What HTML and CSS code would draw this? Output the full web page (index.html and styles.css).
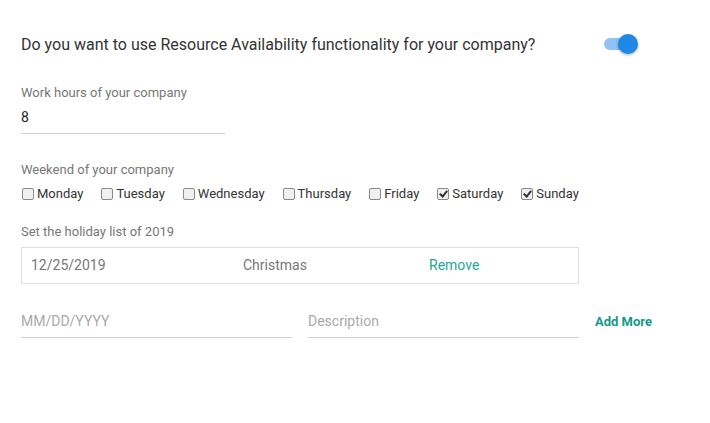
FILE: index.html
```html
<!DOCTYPE html>
<html lang="en">
<head>
    <meta charset="UTF-8">
    <meta name="viewport" content="width=device-width, initial-scale=1.0">
    <title>Resource Availability</title>
    <link rel="stylesheet" href="styles.css">
</head>
<body>
    <div class="settings">
        <!-- Main toggle -->
        <div class="question-row">
            <span class="question">Do you want to use Resource Availability functionality for your company?</span>
            <span class="toggle"><span class="toggle-track"></span><span class="toggle-thumb"></span></span>
        </div>

        <!-- Work hours -->
        <div class="field hours-field">
            <label class="field-label">Work hours of your company</label>
            <div class="text-input hours">8</div>
        </div>

        <!-- Weekend days -->
        <div class="field weekend-field">
            <label class="field-label">Weekend of your company</label>
            <div class="days">
                <label class="day"><span class="box"></span>Monday</label>
                <label class="day"><span class="box"></span>Tuesday</label>
                <label class="day"><span class="box"></span>Wednesday</label>
                <label class="day"><span class="box"></span>Thursday</label>
                <label class="day"><span class="box"></span>Friday</label>
                <label class="day"><span class="box checked"></span>Saturday</label>
                <label class="day"><span class="box checked"></span>Sunday</label>
            </div>
        </div>

        <!-- Holidays -->
        <div class="field holiday-field">
            <label class="field-label">Set the holiday list of 2019</label>
            <div class="holiday-table">
                <span>12/25/2019</span>
                <span>Christmas</span>
                <span class="link">Remove</span>
            </div>
        </div>

        <div class="add-row">
            <div class="text-input placeholder">MM/DD/YYYY</div>
            <div class="text-input placeholder">Description</div>
            <span class="add-more">Add More</span>
        </div>
    </div>
</body>
</html>
```

FILE: styles.css
```css
/* Page base */
body {
    margin: 0;
    font-family: Roboto, "Liberation Sans", sans-serif;
    background: #fff;
    color: #333;
}

.settings {
    padding: 32px 21px 0 21px;
}

/* Top question with toggle */
.question-row {
    display: flex;
    align-items: center;
    height: 24px;
}

.question {
    font-size: 16px;
    color: #333;
    width: 583px;
}

.toggle {
    position: relative;
    width: 36px;
    height: 24px;
    display: inline-block;
}

.toggle-track {
    position: absolute;
    left: 0;
    top: 6px;
    width: 32px;
    height: 12px;
    border-radius: 6px;
    background: #90c2f3;
}

.toggle-thumb {
    position: absolute;
    left: 14px;
    top: 2px;
    width: 20px;
    height: 20px;
    border-radius: 50%;
    background: #1e88e5;
    box-shadow: 0 1px 3px rgba(0, 0, 0, 0.35);
}

/* Form fields */
.hours-field {
    margin-top: 29px;
}

.weekend-field {
    margin-top: 28px;
}

.holiday-field {
    margin-top: 22px;
}

.field-label {
    display: block;
    font-size: 13px;
    color: #777;
    line-height: 16px;
}

.text-input {
    font-size: 14px;
    line-height: 20px;
    padding: 6px 0 6px 0;
    border-bottom: 1px solid #d0d0d0;
}

.hours {
    width: 204px;
    color: #222;
}

/* Weekend checkboxes */
.days {
    display: flex;
    margin-top: 8px;
    font-size: 13px;
    color: #333;
}

.day {
    display: flex;
    align-items: center;
    margin-right: 17px;
    line-height: 16px;
}

.box {
    width: 10px;
    height: 10px;
    border: 1px solid #8a8a8a;
    border-radius: 2px;
    background: #f0f0f0;
    margin: 0 3px 0 1px;
    position: relative;
}

.box.checked::after {
    content: "";
    position: absolute;
    left: 3px;
    top: 0px;
    width: 3px;
    height: 6px;
    border: solid #333;
    border-width: 0 2px 2px 0;
    transform: rotate(40deg);
}

/* Holiday list */
.holiday-table {
    display: grid;
    grid-template-columns: 212px 186px 1fr;
    width: 547px;
    margin-top: 7px;
    padding: 0 0 2px 9px;
    height: 33px;
    align-items: center;
    border: 1px solid #e0e0e0;
    font-size: 14px;
    color: #777;
}

.link {
    color: #26a69a;
}

/* New holiday inputs */
.add-row {
    display: flex;
    align-items: center;
    margin-top: 21px;
}

.add-row .text-input {
    width: 271px;
    margin-right: 16px;
}

.placeholder {
    color: #aaa;
}

.add-more {
    font-size: 13px;
    font-weight: bold;
    color: #16988c;
}
```
